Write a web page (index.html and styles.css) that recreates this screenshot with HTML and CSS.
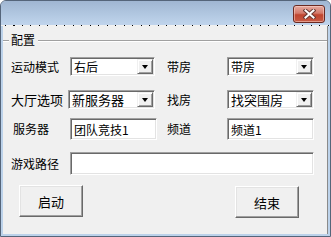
FILE: index.html
```html
<!DOCTYPE html>
<html>
<head>
<meta charset="utf-8">
<link rel="stylesheet" href="styles.css">
</head>
<body>
<div class="window">
  <div class="titlebar">
    <div class="close">
      <svg width="13" height="10" viewBox="0 0 13 10">
        <path d="M2.5 1.5 L10.5 8.5 M10.5 1.5 L2.5 8.5" stroke="#6a3a33" stroke-width="4" stroke-linecap="square" fill="none"/>
        <path d="M2.5 1.5 L10.5 8.5 M10.5 1.5 L2.5 8.5" stroke="#ffffff" stroke-width="2" stroke-linecap="square" fill="none"/>
      </svg>
    </div>
  </div>
  <div class="dots"></div>
  <div class="client">
    <div class="legend-row">
      <span class="rule short"></span>
      <span class="legend">配置</span>
      <span class="rule"></span>
    </div>

    <div class="row r1">
      <span class="label">运动模式</span>
      <div class="sunken combo"><span class="val">右后</span><span class="drop"><i></i></span></div>
      <span class="label l2">带房</span>
      <div class="sunken combo c2"><span class="val">带房</span><span class="drop"><i></i></span></div>
    </div>

    <div class="row r2">
      <span class="label big">大厅选项</span>
      <div class="sunken combo shift"><span class="val big">新服务器</span><span class="drop"><i></i></span></div>
      <span class="label l2 l2b">找房</span>
      <div class="sunken combo c2"><span class="val big">找突围房</span><span class="drop"><i></i></span></div>
    </div>

    <div class="row r3">
      <span class="label ind">服务器</span>
      <div class="sunken edit"><span class="val">团队竞技1</span></div>
      <span class="label l2 l2c">频道</span>
      <div class="sunken edit"><span class="val">频道1</span></div>
    </div>

    <div class="row r4">
      <span class="label">游戏路径</span>
      <div class="sunken edit path"></div>
    </div>

    <div class="buttons">
      <div class="btn">启动</div>
      <div class="btn second">结束</div>
    </div>
  </div>
</div>
</body>
</html>
```

FILE: styles.css
```css
* { box-sizing: border-box; }
html, body {
  margin: 0;
  padding: 0;
  width: 331px;
  height: 237px;
  overflow: hidden;
  background: #ffffff;
  font-family: "Noto Sans CJK SC", "DejaVu Sans", sans-serif;
  color: #000;
}
.window {
  width: 331px;
  height: 237px;
  display: flex;
  flex-direction: column;
  border: 1px solid #55657a;
  border-radius: 6px 6px 0 0;
  background: #bcd2ea;
  overflow: hidden;
  padding: 0 2px 2px 2px;
}
.titlebar {
  height: 24px;
  margin: 0 -2px;
  background: linear-gradient(#a0b6d2, #b3c9e2 60%, #c0d4ec);
  display: flex;
  justify-content: flex-end;
  align-items: flex-start;
  padding: 4px 5px 0 0;
  flex: none;
}
.close {
  width: 32px;
  height: 18px;
  border: 1px solid #6b2a22;
  border-radius: 3px;
  background: linear-gradient(#e6aaa0, #d47a6a 45%, #c0452f 55%, #c65a44);
  box-shadow: inset 0 0 0 1px rgba(255, 220, 210, 0.5);
  display: flex;
  align-items: center;
  justify-content: center;
}
.close svg { display: block; }
.dots {
  height: 1px;
  flex: none;
  margin: 0 -2px;
  background: #f0f0f0 repeating-linear-gradient(90deg, #000 0 1px, transparent 1px 8.5px);
  background-position: 4px 0;
}
.client {
  flex: 1;
  background: #f0f0f0;
  border-right: 1px solid #8a8a8a;
  padding-left: 8px;
  display: flex;
  flex-direction: column;
}
.legend-row {
  margin: 7px 0 0 -8px;
  height: 14px;
  display: flex;
  align-items: center;
}
.rule {
  flex: 1;
  height: 2px;
  border-top: 1px solid #a0a0a0;
  border-bottom: 1px solid #ffffff;
  margin-top: 1px;
}
.rule.short { flex: none; width: 6px; }
.legend {
  font-size: 12px;
  line-height: 16px;
  padding: 0 3px 0 2px;
}
.row {
  display: flex;
  align-items: center;
}
.r1 { margin-top: 10px; height: 19px; }
.r2 { margin-top: 14px; height: 19px; }
.r3 { margin-top: 9px; height: 22px; }
.r4 { margin-top: 12px; height: 23px; }
.label {
  width: 59px;
  font-size: 12px;
  line-height: 16px;
  white-space: nowrap;
}
.label.big { font-size: 13px; }
.label.ind { padding-left: 2px; }
.label.l2 { margin-left: 10px; width: 60px; }
.r1 .label.l2 { margin-left: 12px; }
.l2b { margin-left: 12px !important; }
.l2c { margin-left: 10px !important; }
.sunken {
  background: #ffffff;
  border: 1px solid;
  border-color: #a0a0a0 #ffffff #ffffff #a0a0a0;
  box-shadow: inset 1px 1px #696969, inset -1px -1px #e3e3e3;
  padding: 0 2px;
  height: 100%;
  display: flex;
  align-items: center;
}
.combo { width: 85px; padding-right: 1px; }
.combo.c2 { width: 87px; }
.combo.shift { width: 87px; margin-left: -2px; }
.edit { width: 87px; }
.edit.path { width: 244px; }
.val {
  flex: 1;
  font-size: 12px;
  line-height: 15px;
  padding-left: 1px;
  white-space: nowrap;
}
.val.big { font-size: 13px; }
.drop {
  flex: none;
  width: 16px;
  height: 15px;
  background: #f0f0f0;
  border: 1px solid;
  border-color: #f0f0f0 #696969 #696969 #f0f0f0;
  box-shadow: inset 1px 1px #ffffff, inset -1px -1px #a0a0a0;
  display: flex;
  align-items: center;
  justify-content: center;
}
.drop i {
  display: block;
  width: 0;
  height: 0;
  border-left: 3.5px solid transparent;
  border-right: 3.5px solid transparent;
  border-top: 4px solid #000;
  margin-top: 1px;
}
.buttons {
  margin-top: 10px;
  display: flex;
  justify-content: space-between;
  align-items: flex-start;
  padding-left: 8px;
  padding-right: 28px;
}
.btn {
  width: 64px;
  height: 32px;
  background: #f0f0f0;
  border: 1px solid;
  border-color: #ffffff #696969 #696969 #ffffff;
  box-shadow: inset -1px -1px #a0a0a0, inset 1px 1px #e3e3e3;
  font-size: 13px;
  display: flex;
  align-items: center;
  justify-content: center;
}
.btn.second { margin-top: 1px; }
```
